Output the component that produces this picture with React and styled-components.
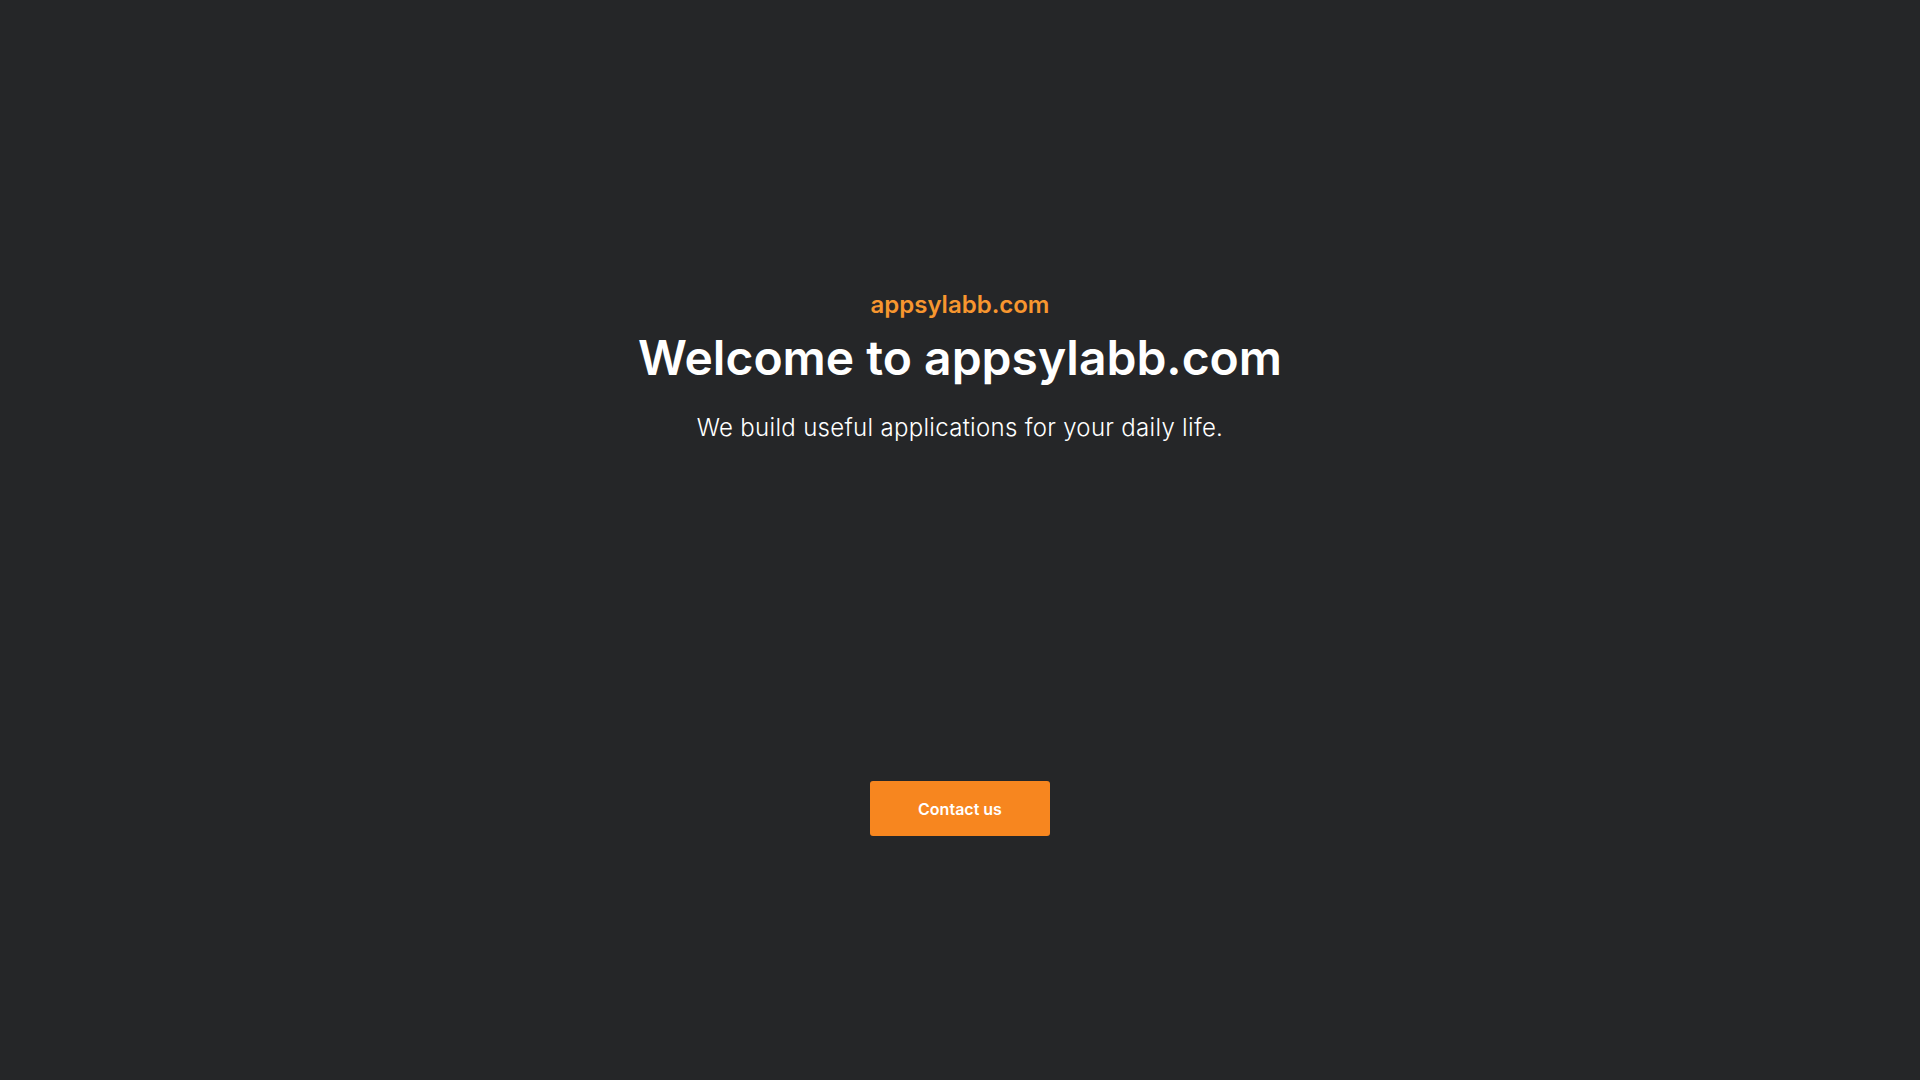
import React from 'react';
import styled, { createGlobalStyle } from 'styled-components';

const GlobalStyle = createGlobalStyle`
  html, body {
    margin: 0;
    padding: 0;
    background: #252628;
    font-family: Inter, "Noto Sans", sans-serif;
  }
`;

const Page = styled.main`
  min-height: 100vh;
  display: flex;
  flex-direction: column;
  align-items: center;
  padding-top: 287px;
  box-sizing: border-box;
  text-align: center;
`;

const Brand = styled.div`
  font-size: 24px;
  line-height: 36px;
  font-weight: 600;
  color: #f7962f;
`;

const Heading = styled.h1`
  margin: 6px 0 0;
  font-size: 48px;
  line-height: 58px;
  font-weight: 600;
  color: #ffffff;
`;

const Tagline = styled.p`
  margin: 23px 0 0;
  font-size: 24px;
  line-height: 36px;
  font-weight: 300;
  letter-spacing: 0.3px;
  color: #ffffff;
`;

const ContactButton = styled.button`
  margin-top: 335px;
  width: 180px;
  height: 55px;
  border: none;
  border-radius: 3px;
  background: #f7861f;
  color: #ffffff;
  font-family: Inter, "Noto Sans", sans-serif;
  font-size: 16px;
  font-weight: 600;
  cursor: pointer;
`;

const App = () => {
  return (
    <>
      <GlobalStyle />
      <Page>
        <Brand>appsylabb.com</Brand>
        <Heading>Welcome to appsylabb.com</Heading>
        <Tagline>We build useful applications for your daily life.</Tagline>
        <ContactButton>Contact us</ContactButton>
      </Page>
    </>
  );
};

export default App;
